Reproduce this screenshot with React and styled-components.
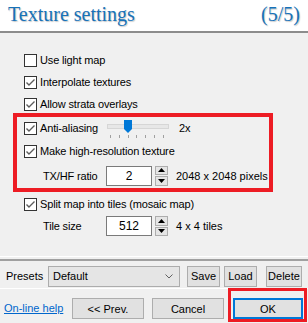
import styled, { createGlobalStyle } from "styled-components";

const GlobalStyle = createGlobalStyle`
  html, body {
    margin: 0;
    padding: 0;
    background: #f0f0f0;
  }
  body {
    font-family: "Liberation Sans", Arial, sans-serif;
    font-size: 11px;
    color: #000;
  }
`;

const Window = styled.div`
  width: 308px;
  height: 323px;
  overflow: hidden;
  background: #f0f0f0;
  display: flex;
  flex-direction: column;
`;

const Header = styled.div`
  height: 33px;
  flex: none;
  box-sizing: border-box;
  background: #fff;
  border-bottom: 2px solid #8c8c8c;
  display: flex;
  justify-content: space-between;
  align-items: center;
  padding: 0 8px 3px 8px;
  font-family: "Liberation Serif", "Times New Roman", serif;
  font-size: 20px;
  color: #1772b8;
  text-shadow: 1px 1px 1px rgba(0, 0, 0, 0.22);
`;

const Group = styled.div`
  height: 224px;
  flex: none;
  box-sizing: border-box;
  padding-top: 16px;
  border-bottom: 1px solid #fff;
`;

const Row = styled.div`
  height: ${(p) => p.h || 22}px;
  display: flex;
  align-items: center;
  padding-left: ${(p) => (p.indent ? 43 : 24)}px;
`;

const Highlight = styled.div`
  margin: -2px 0 1px 13px;
  width: 260px;
  box-sizing: border-box;
  border: 4px solid #ed1c24;

  ${Row} {
    padding-left: 7px;
  }
  ${Row}[data-indent] {
    padding-left: 26px;
  }
`;

const Box = styled.span`
  width: 13px;
  height: 13px;
  box-sizing: border-box;
  border: 1px solid #333;
  background: #fff;
  margin-right: 3px;
  display: flex;
  align-items: center;
  justify-content: center;
  flex: none;
`;

const Label = styled.span`
  white-space: nowrap;
  letter-spacing: -0.15px;
  width: ${(p) => (p.w ? `${p.w}px` : "auto")};
  flex: none;
`;

function Check({ checked, children }) {
  return (
    <>
      <Box>
        {checked && (
          <svg width="11" height="11" viewBox="0 0 11 11">
            <path d="M1.5 5.5 L4 8 L9.5 2.5" fill="none" stroke="#5c5c5c" strokeWidth="1.4" />
          </svg>
        )}
      </Box>
      <Label>{children}</Label>
    </>
  );
}

const Slider = styled.div`
  margin-left: 9px;
  width: 62px;
  height: 22px;
  position: relative;
  flex: none;
`;

const Track = styled.div`
  position: absolute;
  left: 0;
  right: 0;
  top: 7px;
  height: 3px;
  background: #e7e7e7;
  border: 1px solid #d6d6d6;
`;

const Thumb = styled.svg`
  position: absolute;
  left: 17px;
  top: 3px;
`;

const Ticks = styled.div`
  position: absolute;
  left: 3px;
  right: 5px;
  top: 18px;
  display: flex;
  justify-content: space-between;
  span {
    width: 1px;
    height: 3px;
    background: #a0a0a0;
  }
`;

const Value = styled.span`
  margin-left: ${(p) => p.ml || 8}px;
  white-space: nowrap;
`;

const Input = styled.div`
  width: 46px;
  height: 20px;
  box-sizing: border-box;
  border: 1px solid #7a7a7a;
  background: #fff;
  display: flex;
  align-items: center;
  justify-content: center;
  font-size: 12px;
  flex: none;
`;

const Spin = styled.div`
  margin-left: 3px;
  width: 13px;
  height: 20px;
  display: flex;
  flex-direction: column;
  gap: 1px;
  flex: none;
  span {
    flex: 1;
    background: #e5e5e5;
    border: 1px solid #adadad;
    display: flex;
    align-items: center;
    justify-content: center;
  }
`;

function Spinner() {
  return (
    <Spin>
      <span>
        <svg width="7" height="4" viewBox="0 0 7 4"><path d="M0 4 L3.5 0 L7 4 Z" fill="#000" /></svg>
      </span>
      <span>
        <svg width="7" height="4" viewBox="0 0 7 4"><path d="M0 0 L3.5 4 L7 0 Z" fill="#000" /></svg>
      </span>
    </Spin>
  );
}

const Presets = styled.div`
  height: 30px;
  flex: none;
  box-sizing: border-box;
  border-top: 2px solid #a0a0a0;
  border-bottom: 1px solid #fff;
  margin-top: 2px;
  display: flex;
  align-items: center;
  padding: 3px 0 0 6px;
`;

const PresetLabel = styled.span`
  width: 42px;
  flex: none;
`;

const Select = styled.div`
  width: 132px;
  height: 21px;
  box-sizing: border-box;
  border: 1px solid #acacac;
  background: #e5e5e5;
  display: flex;
  align-items: center;
  justify-content: space-between;
  padding: 0 6px 0 4px;
  flex: none;
`;

const SmallButton = styled.button`
  height: 21px;
  box-sizing: border-box;
  padding: 0;
  border: 1px solid #adadad;
  background: #e1e1e1;
  font-family: "Liberation Sans", Arial, sans-serif;
  font-size: 11px;
  color: #000;
  width: ${(p) => p.w}px;
  margin-left: ${(p) => p.ml}px;
  flex: none;
`;

const Footer = styled.div`
  flex: 1;
  display: flex;
  align-items: flex-start;
  padding: 9px 0 0 4px;
`;

const HelpLink = styled.a`
  color: #0066cc;
  text-decoration: underline;
  width: 68px;
  line-height: 21px;
  flex: none;
`;

const Button = styled.button`
  height: 21px;
  width: ${(p) => p.w || 72}px;
  box-sizing: border-box;
  border: ${(p) => (p.primary ? "2px solid #0078d7" : "1px solid #adadad")};
  background: #e1e1e1;
  font-family: "Liberation Sans", Arial, sans-serif;
  font-size: 11px;
  color: #000;
  margin-right: ${(p) => p.mr || 0}px;
  padding: 0;
  flex: none;
`;

const RedFrame = styled.div`
  margin: -10px 0 0 4px;
  border: 3px solid #ed1c24;
  padding: 7px 1px 0 2px;
  flex: none;
`;

export default function App() {
  return (
    <Window>
      <GlobalStyle />
      <Header>
        <span>Texture settings</span>
        <span>(5/5)</span>
      </Header>
      <Group>
        <Row><Check>Use light map</Check></Row>
        <Row><Check checked>Interpolate textures</Check></Row>
        <Row><Check checked>Allow strata overlays</Check></Row>
        <Highlight>
          <Row h={22}>
            <Check checked>Anti-aliasing</Check>
            <Slider>
              <Track />
              <Thumb width="8" height="13" viewBox="0 0 8 13">
                <path d="M0 0 H8 V9 L4 13 L0 9 Z" fill="#0078d7" />
              </Thumb>
              <Ticks>
                {[0, 1, 2, 3, 4, 5, 6].map((i) => <span key={i} />)}
              </Ticks>
            </Slider>
            <Value ml={10}>2x</Value>
          </Row>
          <Row h={24}><Check checked>Make high-resolution texture</Check></Row>
          <Row h={25} data-indent>
            <Label w={63}>TX/HF ratio</Label>
            <Input>2</Input>
            <Spinner />
            <Value>2048 x 2048 pixels</Value>
          </Row>
        </Highlight>
        <Row><Check checked>Split map into tiles (mosaic map)</Check></Row>
        <Row indent>
          <Label w={63}>Tile size</Label>
          <Input>512</Input>
          <Spinner />
          <Value>4 x 4 tiles</Value>
        </Row>
      </Group>
      <Presets>
        <PresetLabel>Presets</PresetLabel>
        <Select>
          <span>Default</span>
          <svg width="8" height="5" viewBox="0 0 8 5"><path d="M0.5 0.5 L4 4 L7.5 0.5" fill="none" stroke="#606060" /></svg>
        </Select>
        <SmallButton w={33} ml={7}>Save</SmallButton>
        <SmallButton w={33} ml={4}>Load</SmallButton>
        <SmallButton w={36} ml={9}>Delete</SmallButton>
      </Presets>
      <Footer>
        <HelpLink>On-line help</HelpLink>
        <Button mr={8}>&lt;&lt; Prev.</Button>
        <Button>Cancel</Button>
        <RedFrame>
          <Button primary w={70}>OK</Button>
        </RedFrame>
      </Footer>
    </Window>
  );
}
